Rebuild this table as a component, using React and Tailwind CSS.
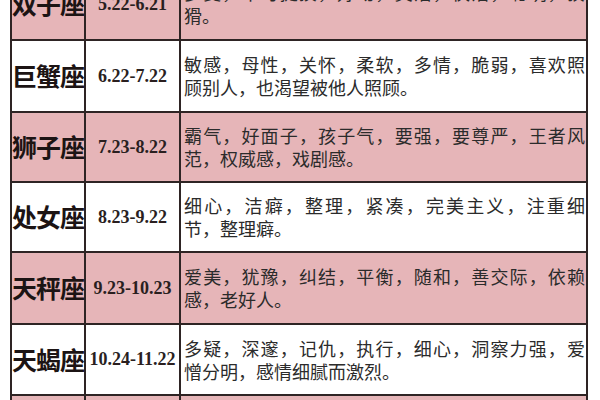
import React from "react";

const rows = [
  { name: "双子座", date: "5.22-6.21", pink: true, h: "h-[72px]", l1: "多变，不可捉摸，好动，灵活，快活，聪明，狡", l2: "猾。" },
  { name: "巨蟹座", date: "6.22-7.22", pink: false, h: "h-[72px]", l1: "敏感，母性，关怀，柔软，多情，脆弱，喜欢照", l2: "顾别人，也渴望被他人照顾。" },
  { name: "狮子座", date: "7.23-8.22", pink: true, h: "h-[70px]", l1: "霸气，好面子，孩子气，要强，要尊严，王者风", l2: "范，权威感，戏剧感。" },
  { name: "处女座", date: "8.23-9.22", pink: false, h: "h-[70px]", l1: "细心，洁癖，整理，紧凑，完美主义，注重细", l2: "节，整理癖。" },
  { name: "天秤座", date: "9.23-10.23", pink: true, h: "h-[72px]", l1: "爱美，犹豫，纠结，平衡，随和，善交际，依赖", l2: "感，老好人。" },
  { name: "天蝎座", date: "10.24-11.22", pink: false, h: "h-[71px]", l1: "多疑，深邃，记仇，执行，细心，洞察力强，爱", l2: "憎分明，感情细腻而激烈。" },
  { name: "射手座", date: "11.23-12.21", pink: true, h: "h-[72px]", l1: "乐观，自由，热情，坦率，冒险，粗心，爱好", l2: "旅行。" },
];

export default function App() {
  return (
    <div className="w-[600px] h-[400px] overflow-hidden bg-white">
      <div className="ml-[10px] -mt-[31px] w-[578px] border-x-2 border-[#2e2424]">
        {rows.map((r) => (
          <div
            key={r.name}
            className={`flex ${r.h} border-b-2 border-[#2e2424] ${r.pink ? "bg-[#e6b5b8]" : "bg-white"}`}
          >
            <div className="w-[74px] shrink-0 border-r-2 border-[#2e2424] flex items-center justify-center text-[25px] font-semibold text-[#1c1414] font-['Noto_Sans_CJK_SC',sans-serif] tracking-[-1px]">
              {r.name}
            </div>
            <div className="w-[95px] shrink-0 border-r-2 border-[#2e2424] flex items-center justify-center text-[18px] font-bold text-[#2a1f1f] font-['Liberation_Serif',serif]">
              {r.date}
            </div>
            <div className="flex-1 flex flex-col justify-center pl-[3px] pr-[1px] text-[18px] leading-[23px] text-[#2b2b2b] font-['Noto_Sans_CJK_SC',sans-serif]">
              <div className="text-justify [text-align-last:justify]">{r.l1}</div>
              <div>{r.l2}</div>
            </div>
          </div>
        ))}
      </div>
    </div>
  );
}
